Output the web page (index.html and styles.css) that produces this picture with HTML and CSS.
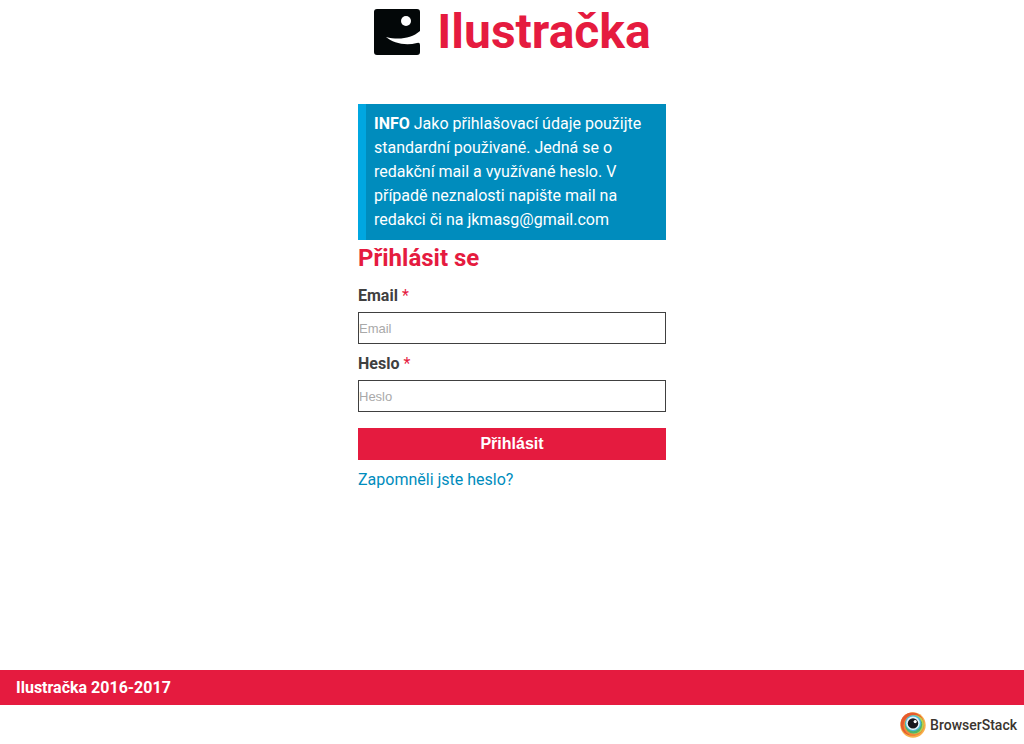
FILE: index.html
```html
<!DOCTYPE html>
<html lang="cs">
<head>
<meta charset="utf-8">
<meta name="viewport" content="width=device-width, initial-scale=1">
<title>Ilustračka</title>
<link rel="stylesheet" href="styles.css">
</head>
<body>
<header class="header">
  <svg class="logo" viewBox="0 0 48 48" aria-hidden="true">
    <path d="M4 1H44Q47 1 47 4V23C38 31 25 32 13 29C20 35 32 38 44 35Q47 34 47 37V44Q47 47 44 47H4Q1 47 1 44V4Q1 1 4 1Z" fill="#030708"/>
    <circle cx="33" cy="13" r="5" fill="#fff"/>
  </svg>
  <h1 class="title">Ilustračka</h1>
</header>
<main class="main">
  <p class="info"><strong>INFO</strong> Jako přihlašovací údaje použijte standardní použivané. Jedná se o redakční mail a využívané heslo. V případě neznalosti napište mail na redakci či na jkmasg@gmail.com</p>
  <form class="form">
    <h2 class="heading">Přihlásit se</h2>
    <label class="label" for="email">Email <span class="required">*</span></label>
    <input class="input" id="email" type="email" placeholder="Email">
    <label class="label" for="password">Heslo <span class="required">*</span></label>
    <input class="input" id="password" type="password" placeholder="Heslo">
    <button class="button" type="submit">Přihlásit</button>
    <a class="link" href="#">Zapomněli jste heslo?</a>
  </form>
</main>
<footer class="footer">
  <div class="bar">Ilustračka 2016-2017</div>
  <div class="sponsor">
    <svg class="eye" viewBox="0 0 26 26" aria-hidden="true">
      <circle cx="13" cy="13" r="12.7" fill="#f7b04b"/>
      <circle cx="12.2" cy="12" r="11.6" fill="#e65a2e"/>
      <circle cx="13.8" cy="13.4" r="10.4" fill="#ee8a3b"/>
      <circle cx="14.6" cy="12.5" r="9.4" fill="#bdcf4d"/>
      <circle cx="13.6" cy="12.8" r="8.6" fill="#4fb469"/>
      <circle cx="13.2" cy="11.2" r="8" fill="#4db8dd"/>
      <circle cx="13" cy="11.2" r="6.8" fill="#e4f4f9"/>
      <circle cx="13" cy="11.4" r="5.2" fill="#17171d"/>
      <circle cx="15.2" cy="9.6" r="1.6" fill="#fff"/>
    </svg>
    <span class="sponsor-name">BrowserStack</span>
  </div>
</footer>
</body>
</html>
```

FILE: styles.css
```css
* {
  box-sizing: border-box;
}

body {
  display: flex;
  flex-direction: column;
  min-height: 100vh;
  margin: 0;
  background: #fff;
  color: #404040;
  font: 16px/24px Roboto, sans-serif;
}

.header {
  display: flex;
  align-items: center;
  justify-content: center;
  gap: 16px;
  height: 64px;
}

.logo {
  width: 48px;
  height: 48px;
}

.title {
  margin: 0;
  color: #e51b3f;
  font-size: 48px;
  line-height: 64px;
  font-weight: 700;
}

.main {
  flex: 1;
  width: 100%;
  max-width: 308px;
  margin: 40px auto 0;
}

.info {
  margin: 0;
  padding: 8px;
  border-left: 8px solid #00a7e1;
  background: #008cbd;
  color: #fff;
}

.info strong {
  font-weight: 700;
}

.form {
  display: flex;
  flex-direction: column;
}

.heading {
  margin: 0 0 8px;
  color: #e51b3f;
  font-size: 24px;
  line-height: 36px;
  font-weight: 700;
}

.label {
  line-height: 24px;
  font-weight: 700;
}

.required {
  color: #e51b3f;
  font-weight: 400;
}

.input {
  width: 100%;
  height: 32px;
  margin: 4px 0 8px;
  padding: 0;
  border: 1px solid #404040;
  border-radius: 0;
  background: #fff;
  font: 13px "Liberation Sans", Arial, sans-serif;
}

.input::placeholder {
  color: #a9a9a9;
}

.button {
  height: 32px;
  margin: 8px 0;
  padding: 0;
  border: 0;
  background: #e51b3f;
  color: #fff;
  font: 700 16px "Liberation Sans", Arial, sans-serif;
}

.link {
  align-self: flex-start;
  color: #008cbd;
  text-decoration: none;
}

.bar {
  padding: 6px 16px 5px;
  background: #e51b3f;
  color: #fff;
  font-weight: 700;
}

.sponsor {
  display: flex;
  align-items: center;
  justify-content: flex-end;
  gap: 4px;
  height: 39px;
  padding-right: 7px;
}

.eye {
  width: 26px;
  height: 26px;
}

.sponsor-name {
  color: #3b352f;
  font-size: 14px;
  font-weight: 500;
}
```
